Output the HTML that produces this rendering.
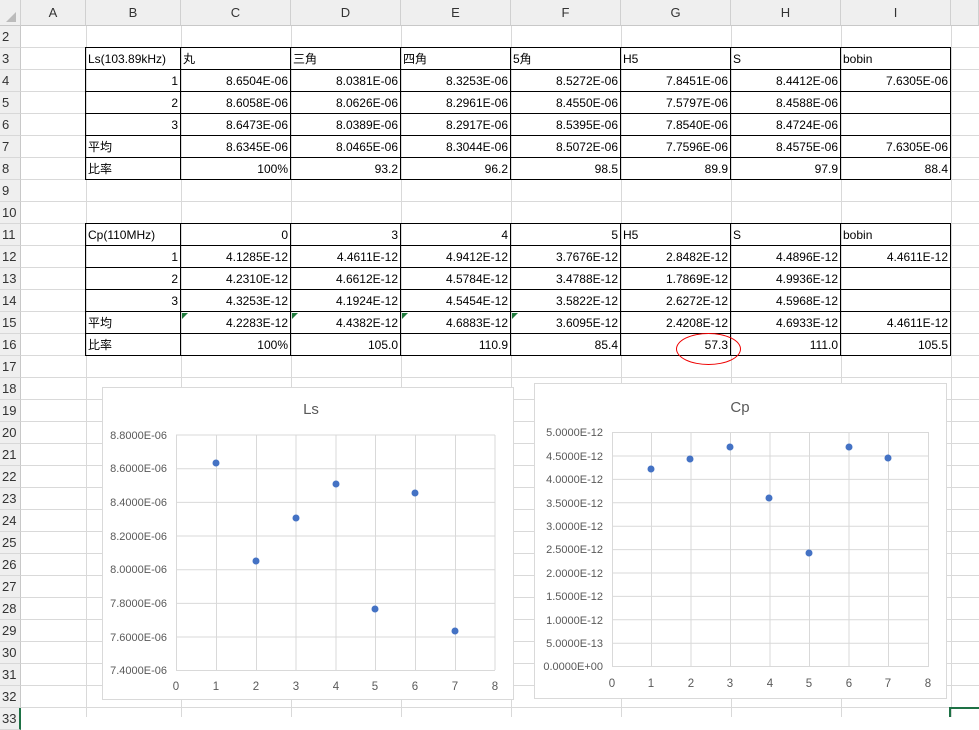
<!DOCTYPE html><html><head><meta charset="utf-8"><style>
*{margin:0;padding:0;box-sizing:border-box}
body{width:979px;height:717px;overflow:hidden;background:#fff;font-family:"Liberation Sans","Noto Sans CJK JP",sans-serif;font-size:12px;position:relative}
.a{position:absolute}
.vl{position:absolute;top:0;width:1px;height:717px;background:#d9d9d9}
.hl{position:absolute;left:0;width:979px;height:1px;background:#d9d9d9}
.ch{position:absolute;top:0;height:26px;line-height:26px;text-align:center;color:#333;font-size:13px;background:#efefef;border-right:1px solid #d0d0d0;border-bottom:1px solid #c8c8c8}
.rh{position:absolute;left:0;width:21px;height:22px;line-height:22px;padding-left:2px;color:#333;font-size:13px;background:#efefef;border-right:1px solid #c8c8c8;border-bottom:1px solid #d8d8d8}
table{position:absolute;border-collapse:collapse}
td{border:1px solid #000;height:22px;width:110px;padding:0 2px;font-size:12px;white-space:nowrap}
td:first-child{width:95px}
td.r{text-align:right}
.tri{position:absolute;width:0;height:0;border-top:6px solid #1e7a3a;border-right:6px solid transparent}
</style></head><body>
<div class="vl" style="left:86px"></div><div class="vl" style="left:181px"></div><div class="vl" style="left:291px"></div><div class="vl" style="left:401px"></div><div class="vl" style="left:511px"></div><div class="vl" style="left:621px"></div><div class="vl" style="left:731px"></div><div class="vl" style="left:841px"></div><div class="vl" style="left:951px"></div>
<div class="hl" style="top:47px"></div><div class="hl" style="top:69px"></div><div class="hl" style="top:91px"></div><div class="hl" style="top:113px"></div><div class="hl" style="top:135px"></div><div class="hl" style="top:157px"></div><div class="hl" style="top:179px"></div><div class="hl" style="top:201px"></div><div class="hl" style="top:223px"></div><div class="hl" style="top:245px"></div><div class="hl" style="top:267px"></div><div class="hl" style="top:289px"></div><div class="hl" style="top:311px"></div><div class="hl" style="top:333px"></div><div class="hl" style="top:355px"></div><div class="hl" style="top:377px"></div><div class="hl" style="top:399px"></div><div class="hl" style="top:421px"></div><div class="hl" style="top:443px"></div><div class="hl" style="top:465px"></div><div class="hl" style="top:487px"></div><div class="hl" style="top:509px"></div><div class="hl" style="top:531px"></div><div class="hl" style="top:553px"></div><div class="hl" style="top:575px"></div><div class="hl" style="top:597px"></div><div class="hl" style="top:619px"></div><div class="hl" style="top:641px"></div><div class="hl" style="top:663px"></div><div class="hl" style="top:685px"></div><div class="hl" style="top:707px"></div>

<div class="ch" style="left:0;width:21px"></div>
<div class="ch" style="left:21px;width:65px">A</div><div class="ch" style="left:86px;width:95px">B</div><div class="ch" style="left:181px;width:110px">C</div><div class="ch" style="left:291px;width:110px">D</div><div class="ch" style="left:401px;width:110px">E</div><div class="ch" style="left:511px;width:110px">F</div><div class="ch" style="left:621px;width:110px">G</div><div class="ch" style="left:731px;width:110px">H</div><div class="ch" style="left:841px;width:110px">I</div><div class="ch" style="left:951px;width:28px"></div>
<div class="a" style="left:6px;top:12px;width:0;height:0;border-bottom:10px solid #bbb;border-left:10px solid transparent"></div>

<div class="rh" style="top:26px">2</div><div class="rh" style="top:48px">3</div><div class="rh" style="top:70px">4</div><div class="rh" style="top:92px">5</div><div class="rh" style="top:114px">6</div><div class="rh" style="top:136px">7</div><div class="rh" style="top:158px">8</div><div class="rh" style="top:180px">9</div><div class="rh" style="top:202px">10</div><div class="rh" style="top:224px">11</div><div class="rh" style="top:246px">12</div><div class="rh" style="top:268px">13</div><div class="rh" style="top:290px">14</div><div class="rh" style="top:312px">15</div><div class="rh" style="top:334px">16</div><div class="rh" style="top:356px">17</div><div class="rh" style="top:378px">18</div><div class="rh" style="top:400px">19</div><div class="rh" style="top:422px">20</div><div class="rh" style="top:444px">21</div><div class="rh" style="top:466px">22</div><div class="rh" style="top:488px">23</div><div class="rh" style="top:510px">24</div><div class="rh" style="top:532px">25</div><div class="rh" style="top:554px">26</div><div class="rh" style="top:576px">27</div><div class="rh" style="top:598px">28</div><div class="rh" style="top:620px">29</div><div class="rh" style="top:642px">30</div><div class="rh" style="top:664px">31</div><div class="rh" style="top:686px">32</div><div class="rh" style="top:708px;border-right:2px solid #1e7145">33</div>

<table style="left:85px;top:47px">
<tr><td>Ls(103.89kHz)</td><td>丸</td><td>三角</td><td>四角</td><td>5角</td><td>H5</td><td>S</td><td>bobin</td></tr>
<tr><td class="r">1</td><td class="r">8.6504E-06</td><td class="r">8.0381E-06</td><td class="r">8.3253E-06</td><td class="r">8.5272E-06</td><td class="r">7.8451E-06</td><td class="r">8.4412E-06</td><td class="r">7.6305E-06</td></tr>
<tr><td class="r">2</td><td class="r">8.6058E-06</td><td class="r">8.0626E-06</td><td class="r">8.2961E-06</td><td class="r">8.4550E-06</td><td class="r">7.5797E-06</td><td class="r">8.4588E-06</td><td></td></tr>
<tr><td class="r">3</td><td class="r">8.6473E-06</td><td class="r">8.0389E-06</td><td class="r">8.2917E-06</td><td class="r">8.5395E-06</td><td class="r">7.8540E-06</td><td class="r">8.4724E-06</td><td></td></tr>
<tr><td>平均</td><td class="r">8.6345E-06</td><td class="r">8.0465E-06</td><td class="r">8.3044E-06</td><td class="r">8.5072E-06</td><td class="r">7.7596E-06</td><td class="r">8.4575E-06</td><td class="r">7.6305E-06</td></tr>
<tr><td>比率</td><td class="r">100%</td><td class="r">93.2</td><td class="r">96.2</td><td class="r">98.5</td><td class="r">89.9</td><td class="r">97.9</td><td class="r">88.4</td></tr>
</table>
<table style="left:85px;top:223px">
<tr><td>Cp(110MHz)</td><td class="r">0</td><td class="r">3</td><td class="r">4</td><td class="r">5</td><td>H5</td><td>S</td><td>bobin</td></tr>
<tr><td class="r">1</td><td class="r">4.1285E-12</td><td class="r">4.4611E-12</td><td class="r">4.9412E-12</td><td class="r">3.7676E-12</td><td class="r">2.8482E-12</td><td class="r">4.4896E-12</td><td class="r">4.4611E-12</td></tr>
<tr><td class="r">2</td><td class="r">4.2310E-12</td><td class="r">4.6612E-12</td><td class="r">4.5784E-12</td><td class="r">3.4788E-12</td><td class="r">1.7869E-12</td><td class="r">4.9936E-12</td><td></td></tr>
<tr><td class="r">3</td><td class="r">4.3253E-12</td><td class="r">4.1924E-12</td><td class="r">4.5454E-12</td><td class="r">3.5822E-12</td><td class="r">2.6272E-12</td><td class="r">4.5968E-12</td><td></td></tr>
<tr><td>平均</td><td class="r">4.2283E-12</td><td class="r">4.4382E-12</td><td class="r">4.6883E-12</td><td class="r">3.6095E-12</td><td class="r">2.4208E-12</td><td class="r">4.6933E-12</td><td class="r">4.4611E-12</td></tr>
<tr><td>比率</td><td class="r">100%</td><td class="r">105.0</td><td class="r">110.9</td><td class="r">85.4</td><td class="r">57.3</td><td class="r">111.0</td><td class="r">105.5</td></tr>
</table>
<div class="tri" style="left:182px;top:313px"></div><div class="tri" style="left:292px;top:313px"></div><div class="tri" style="left:402px;top:313px"></div><div class="tri" style="left:512px;top:313px"></div>
<div class="a" style="left:676px;top:333px;width:65px;height:32px;border:1.5px solid #e00;border-radius:50%"></div>

<div class="a" style="left:949px;top:707px;width:30px;height:10px;border:2px solid #1e7145;border-right:none;border-bottom:none"></div>

<svg class="a" style="left:102px;top:387px" width="412" height="313" viewBox="102 387 412 313" font-family="Liberation Sans, sans-serif">
<rect x="102.5" y="387.5" width="411" height="312" fill="#fff" stroke="#d9d9d9"/>
<text x="311" y="414" font-size="15" fill="#595959" text-anchor="middle">Ls</text>
<g stroke="#d9d9d9">
<line x1="176" y1="435" x2="495" y2="435"/><line x1="176" y1="468.7" x2="495" y2="468.7"/><line x1="176" y1="502.4" x2="495" y2="502.4"/><line x1="176" y1="536" x2="495" y2="536"/><line x1="176" y1="569.7" x2="495" y2="569.7"/><line x1="176" y1="603.4" x2="495" y2="603.4"/><line x1="176" y1="637" x2="495" y2="637"/><line x1="176" y1="670.5" x2="495" y2="670.5"/>
<line x1="176.5" y1="435" x2="176.5" y2="670"/><line x1="216.5" y1="435" x2="216.5" y2="670"/><line x1="256.5" y1="435" x2="256.5" y2="670"/><line x1="296" y1="435" x2="296" y2="670"/><line x1="336" y1="435" x2="336" y2="670"/><line x1="375.5" y1="435" x2="375.5" y2="670"/><line x1="415.5" y1="435" x2="415.5" y2="670"/><line x1="455.5" y1="435" x2="455.5" y2="670"/><line x1="495" y1="435" x2="495" y2="670"/>
</g>
<g font-size="11" fill="#595959" text-anchor="end">
<text x="167" y="439">8.8000E-06</text><text x="167" y="472">8.6000E-06</text><text x="167" y="506">8.4000E-06</text><text x="167" y="540">8.2000E-06</text><text x="167" y="573">8.0000E-06</text><text x="167" y="607">7.8000E-06</text><text x="167" y="641">7.6000E-06</text><text x="167" y="674">7.4000E-06</text>
</g>
<g font-size="11.5" fill="#595959" text-anchor="middle">
<text x="176" y="690">0</text><text x="216" y="690">1</text><text x="256" y="690">2</text><text x="296" y="690">3</text><text x="336" y="690">4</text><text x="375" y="690">5</text><text x="415" y="690">6</text><text x="455" y="690">7</text><text x="495" y="690">8</text>
</g>
<g fill="#4472c4">
<circle cx="216" cy="463" r="3.5"/><circle cx="256" cy="561" r="3.5"/><circle cx="296" cy="518" r="3.5"/><circle cx="336" cy="484" r="3.5"/><circle cx="375" cy="609" r="3.5"/><circle cx="415" cy="493" r="3.5"/><circle cx="455" cy="631" r="3.5"/>
</g>
</svg>

<svg class="a" style="left:534px;top:383px" width="413" height="316" viewBox="534 383 413 316" font-family="Liberation Sans, sans-serif">
<rect x="534.5" y="383.5" width="412" height="315" fill="#fff" stroke="#d9d9d9"/>
<text x="740" y="412" font-size="15" fill="#595959" text-anchor="middle">Cp</text>
<g stroke="#d9d9d9">
<line x1="612" y1="432.5" x2="929" y2="432.5"/><line x1="612" y1="456" x2="929" y2="456"/><line x1="612" y1="479.4" x2="929" y2="479.4"/><line x1="612" y1="502.8" x2="929" y2="502.8"/><line x1="612" y1="526.2" x2="929" y2="526.2"/><line x1="612" y1="549.6" x2="929" y2="549.6"/><line x1="612" y1="573" x2="929" y2="573"/><line x1="612" y1="596.4" x2="929" y2="596.4"/><line x1="612" y1="619.8" x2="929" y2="619.8"/><line x1="612" y1="643.2" x2="929" y2="643.2"/><line x1="612" y1="666.5" x2="929" y2="666.5"/>
<line x1="612.5" y1="432" x2="612.5" y2="667"/><line x1="651.5" y1="432" x2="651.5" y2="667"/><line x1="691" y1="432" x2="691" y2="667"/><line x1="730.5" y1="432" x2="730.5" y2="667"/><line x1="770" y1="432" x2="770" y2="667"/><line x1="809.5" y1="432" x2="809.5" y2="667"/><line x1="849" y1="432" x2="849" y2="667"/><line x1="888.5" y1="432" x2="888.5" y2="667"/><line x1="928.5" y1="432" x2="928.5" y2="667"/>
</g>
<g font-size="11" fill="#595959" text-anchor="end">
<text x="603" y="436">5.0000E-12</text><text x="603" y="460">4.5000E-12</text><text x="603" y="483">4.0000E-12</text><text x="603" y="507">3.5000E-12</text><text x="603" y="530">3.0000E-12</text><text x="603" y="553">2.5000E-12</text><text x="603" y="577">2.0000E-12</text><text x="603" y="600">1.5000E-12</text><text x="603" y="624">1.0000E-12</text><text x="603" y="647">5.0000E-13</text><text x="603" y="670">0.0000E+00</text>
</g>
<g font-size="11.5" fill="#595959" text-anchor="middle">
<text x="612" y="687">0</text><text x="651" y="687">1</text><text x="691" y="687">2</text><text x="730" y="687">3</text><text x="770" y="687">4</text><text x="809" y="687">5</text><text x="849" y="687">6</text><text x="888" y="687">7</text><text x="928" y="687">8</text>
</g>
<g fill="#4472c4">
<circle cx="651" cy="469" r="3.5"/><circle cx="690" cy="459" r="3.5"/><circle cx="730" cy="447" r="3.5"/><circle cx="769" cy="498" r="3.5"/><circle cx="809" cy="553" r="3.5"/><circle cx="849" cy="447" r="3.5"/><circle cx="888" cy="458" r="3.5"/>
</g>
</svg>
</body></html>
